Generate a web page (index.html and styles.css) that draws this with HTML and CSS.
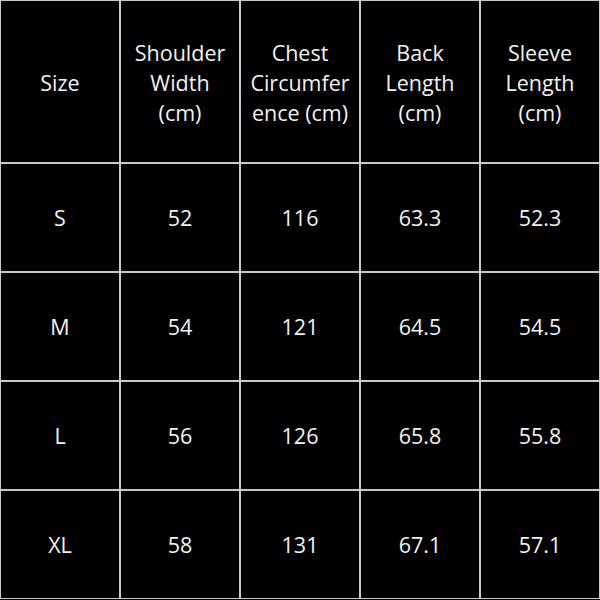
FILE: index.html
```html
<!DOCTYPE html>
<html>
<head>
<meta charset="utf-8">
<link rel="stylesheet" href="styles.css">
</head>
<body>
<div class="table">
  <div class="cell head">Size</div>
  <div class="cell head">Shoulder<br>Width<br>(cm)</div>
  <div class="cell head">Chest<br>Circumfer<br>ence (cm)</div>
  <div class="cell head">Back<br>Length<br>(cm)</div>
  <div class="cell head">Sleeve<br>Length<br>(cm)</div>

  <div class="cell">S</div><div class="cell">52</div><div class="cell">116</div><div class="cell">63.3</div><div class="cell">52.3</div>
  <div class="cell">M</div><div class="cell">54</div><div class="cell">121</div><div class="cell">64.5</div><div class="cell">54.5</div>
  <div class="cell">L</div><div class="cell">56</div><div class="cell">126</div><div class="cell">65.8</div><div class="cell">55.8</div>
  <div class="cell">XL</div><div class="cell">58</div><div class="cell">131</div><div class="cell">67.1</div><div class="cell">57.1</div>
</div>
</body>
</html>
```
FILE: styles.css
```css
html, body {
  margin: 0;
  padding: 0;
  background: #000;
}
.table {
  width: 600px;
  height: 599px;
  box-sizing: border-box;
  display: grid;
  grid-template-columns: repeat(5, 1fr);
  grid-template-rows: 161px repeat(4, 107px);
  gap: 2px;
  padding: 1px;
  background: #c8c8c8;
}
.cell {
  background: #000;
  color: #f2f2f2;
  font-family: "Open Sans", sans-serif;
  font-size: 21.5px;
  line-height: 30px;
  display: flex;
  align-items: center;
  justify-content: center;
  text-align: center;
}
.head {
  padding-top: 3px;
}
```
